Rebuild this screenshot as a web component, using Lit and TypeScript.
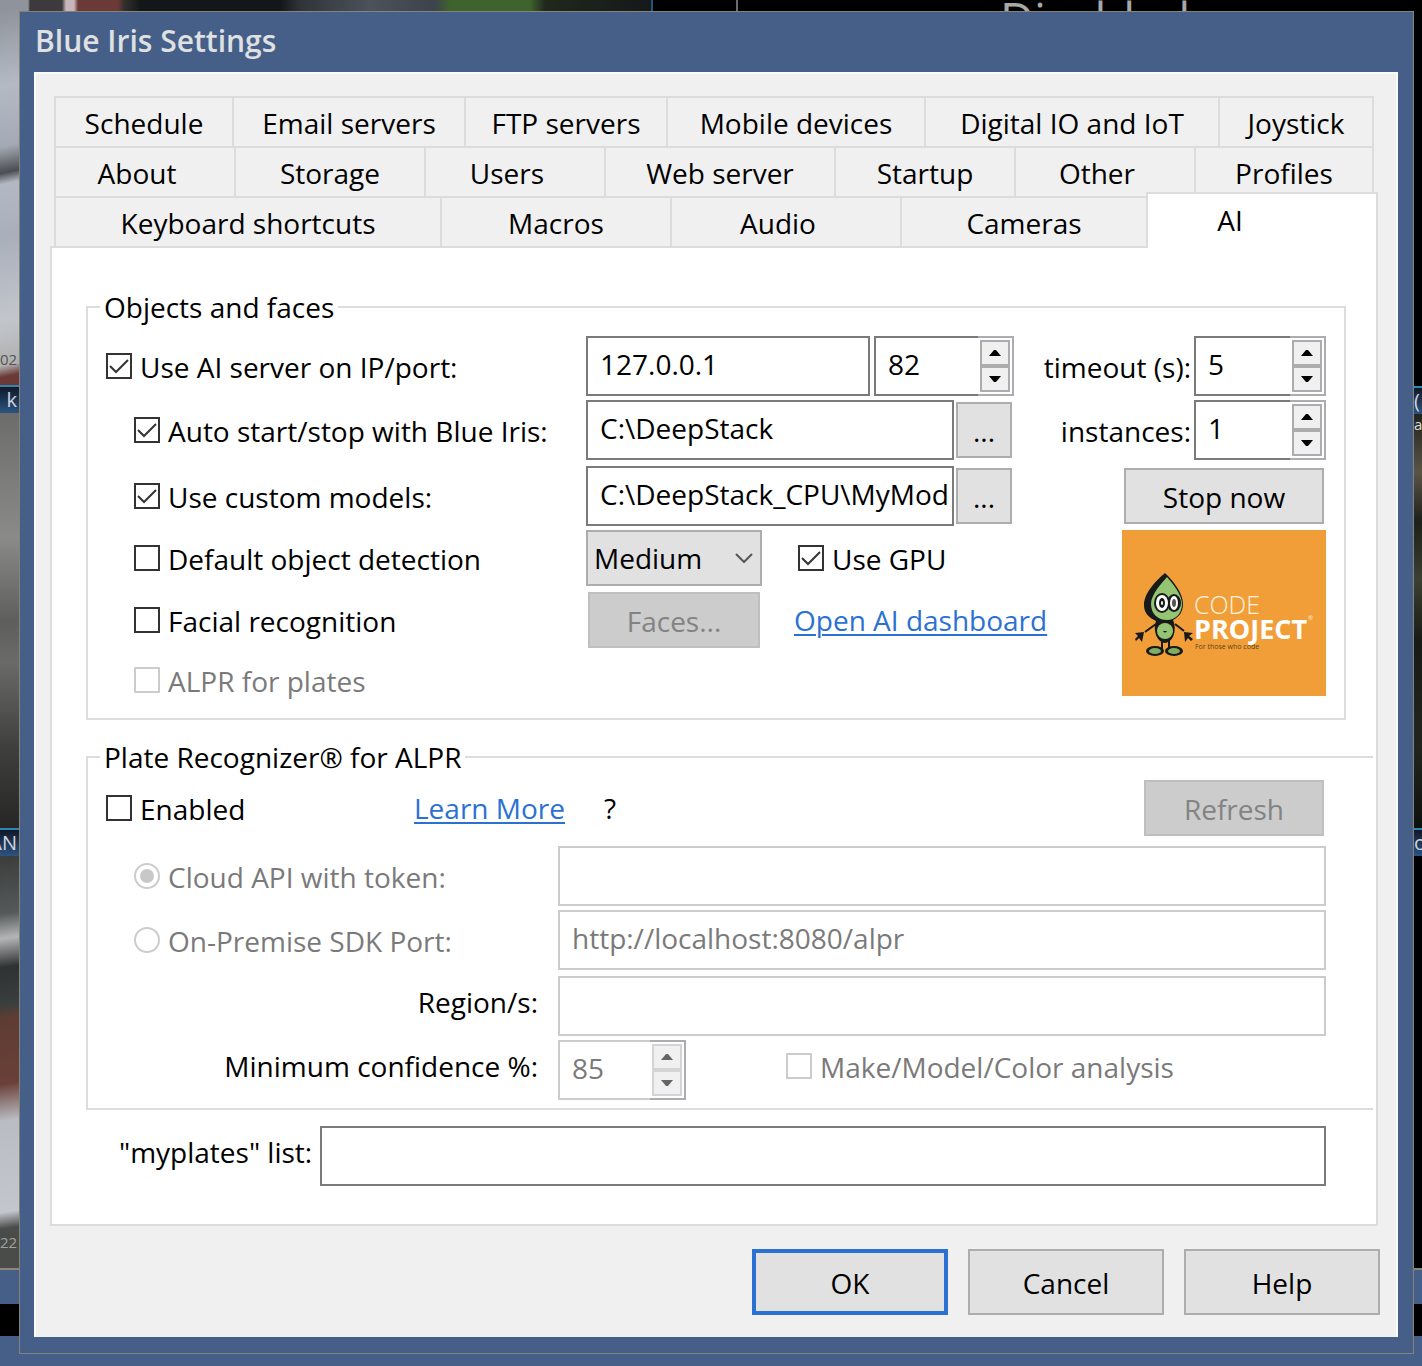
import { LitElement, html, css, svg, nothing } from "lit";
import { customElement, property } from "lit/decorators.js";
import { classMap } from "lit/directives/class-map.js";

interface Tab {
  label: string;
  trail?: boolean;
  active?: boolean;
}

const TAB_ROWS: { name: string; tabs: Tab[] }[] = [
  {
    name: "row-a",
    tabs: [
      { label: "Schedule" },
      { label: "Email servers" },
      { label: "FTP servers" },
      { label: "Mobile devices" },
      { label: "Digital IO and IoT" },
      { label: "Joystick" },
    ],
  },
  {
    name: "row-b",
    tabs: [
      { label: "About", trail: true },
      { label: "Storage" },
      { label: "Users", trail: true },
      { label: "Web server" },
      { label: "Startup" },
      { label: "Other", trail: true },
      { label: "Profiles" },
    ],
  },
  {
    name: "row-c",
    tabs: [
      { label: "Keyboard shortcuts" },
      { label: "Macros" },
      { label: "Audio", trail: true },
      { label: "Cameras" },
      { label: "AI", active: true },
    ],
  },
];

const controlText = css`
  * {
    box-sizing: border-box;
  }
  input,
  button,
  select {
    font: inherit;
    color: inherit;
    margin: 0;
    border-radius: 0;
  }
`;

@customElement("tick-option")
class TickOption extends LitElement {
  @property() label = "";
  @property() kind: "checkbox" | "radio" = "checkbox";
  @property({ type: Boolean }) checked = false;
  @property({ type: Boolean }) disabled = false;

  static styles = [
    controlText,
    css`
      :host {
        display: block;
      }
      .option {
        display: flex;
        align-items: center;
        gap: 8px;
        white-space: nowrap;
      }
      .box {
        display: grid;
        flex: none;
        width: 26px;
        height: 26px;
      }
      .box input,
      .box svg {
        grid-area: 1 / 1;
        width: 26px;
        height: 26px;
      }
      .box input {
        appearance: none;
        background: #fff;
        border: 2px solid #333;
      }
      .box.radio input {
        border-radius: 50%;
      }
      .box svg {
        pointer-events: none;
      }
      .text {
        padding-top: 2px;
      }
      .disabled {
        color: #7a7a7a;
      }
      .disabled .box input {
        border-color: #ccc;
      }
    `,
  ];

  render() {
    const mark =
      this.kind === "radio"
        ? svg`<circle cx="13" cy="13" r="7" fill="#c8c8c8" />`
        : svg`<path d="M4 13l6 6L22 7" fill="none" stroke="#333" stroke-width="2" />`;
    return html`<label class=${classMap({ option: true, disabled: this.disabled })}>
      <span class=${classMap({ box: true, radio: this.kind === "radio" })}>
        <input
          type=${this.kind}
          .checked=${this.checked}
          ?disabled=${this.disabled}
        />
        ${this.checked
          ? html`<svg viewBox="0 0 26 26" aria-hidden="true">${mark}</svg>`
          : nothing}
      </span>
      <span class="text">${this.label}</span>
    </label>`;
  }
}

@customElement("number-spinner")
class NumberSpinner extends LitElement {
  @property() value = "";
  @property() label = "";
  @property({ type: Boolean }) disabled = false;

  static styles = [
    controlText,
    css`
      :host {
        display: flex;
        min-width: 0;
        height: 60px;
      }
      .value {
        flex: 1 1 0;
        width: 0;
        min-width: 0;
        border: 2px solid #7a7a7a;
        border-right: 0;
        background: #fff;
        padding: 0 0 4px 12px;
      }
      .steps {
        display: grid;
        flex: none;
        grid-template-rows: 1fr 1fr;
        width: 36px;
        padding: 2px;
        border: 2px solid #abadb3;
        border-left: 0;
        background: #fff;
      }
      .step {
        display: grid;
        place-items: center;
        padding: 0;
        border: 2px solid #acacac;
        background: #f0f0f0;
      }
      .step svg {
        width: 12px;
        height: 6px;
        fill: #000;
      }
      .disabled {
        color: #7a7a7a;
        border-color: #ccc;
      }
      .steps.disabled {
        border-color: #abadb3;
      }
      .disabled .step {
        border-color: #d4d4d4;
      }
      .disabled .step svg {
        fill: #666;
      }
    `,
  ];

  render() {
    const off = this.disabled;
    return html`<input
        class=${classMap({ value: true, disabled: off })}
        type="text"
        aria-label=${this.label}
        .value=${this.value}
        ?disabled=${off}
      />
      <div class=${classMap({ steps: true, disabled: off })}>
        <button class="step" aria-label="Increase" ?disabled=${off}>
          <svg viewBox="0 0 12 6"><path d="M5 0h2l5 6H0z" /></svg>
        </button>
        <button class="step" aria-label="Decrease" ?disabled=${off}>
          <svg viewBox="0 0 12 6"><path d="M0 0h12L7 6H5z" /></svg>
        </button>
      </div>`;
  }
}

@customElement("code-project-logo")
class CodeProjectLogo extends LitElement {
  static styles = css`
    :host {
      display: block;
    }
    .logo {
      display: block;
      width: 204px;
      height: 166px;
      background: #f19e38;
    }
    .light {
      font: 300 25px "Open Sans", "Noto Sans", sans-serif;
      fill: #fff3df;
    }
    .heavy {
      font: 700 27px "Open Sans", "Noto Sans", sans-serif;
      fill: #fff;
    }
    .tiny {
      font: 7px "Open Sans", "Noto Sans", sans-serif;
      fill: #5c421c;
    }
    .mark {
      font: 6px "Open Sans", "Noto Sans", sans-serif;
      fill: #fff3df;
    }
  `;

  render() {
    return html`<svg class="logo" viewBox="0 0 204 166" role="img" aria-label="CodeProject">
      <g stroke="#17191a" fill="none" stroke-width="2">
        <path d="M34 94L23 102M53 94L62 101M40 110V119M47 110V119" />
      </g>
      <path
        d="M43 43C36 49 22 62 22 75C22 84 28 88 34 91C31 99 34 112 43 113C52 112 55 99 51 90C57 87 61 82 61 74C61 62 50 50 43 43Z"
        fill="#17191a"
      />
      <path
        d="M45 47C40 53 29 64 29 74C29 84 36 90 45 90C54 90 60 83 60 74C60 64 50 53 45 47Z"
        fill="#93c572"
      />
      <circle cx="43" cy="101" r="8" fill="#93c572" />
      <ellipse cx="40" cy="73" rx="8" ry="10" fill="#17191a" />
      <ellipse cx="52" cy="73" rx="7" ry="9" fill="#17191a" />
      <ellipse cx="40" cy="73" rx="6" ry="8" fill="#fff" />
      <ellipse cx="52" cy="73" rx="4" ry="7" fill="#fff" />
      <ellipse cx="40" cy="73" rx="3" ry="5" fill="#17191a" />
      <ellipse cx="52" cy="73" rx="2" ry="4" fill="#555" />
      <ellipse cx="40" cy="73" rx="1" ry="2" fill="#fff" />
      <path d="M41 101q2 3 4 0z" fill="#17191a" />
      <path
        d="M13 103L22 102L20 112L17 108L14 111L13 109L16 106ZM71 103L62 102L63 112L66 108L69 111L71 109L67 106Z"
        fill="#17191a"
      />
      <ellipse cx="33" cy="121" rx="9" ry="5" fill="#17191a" />
      <ellipse cx="52" cy="121" rx="9" ry="5" fill="#17191a" />
      <ellipse cx="33" cy="121" rx="6" ry="3" fill="#7fae62" />
      <ellipse cx="52" cy="121" rx="6" ry="3" fill="#7fae62" />
      <text class="light" x="72" y="84">CODE</text>
      <text class="heavy" x="72" y="109">PROJECT</text>
      <text class="mark" x="186" y="90">®</text>
      <text class="tiny" x="73" y="119">For those who code</text>
    </svg>`;
  }
}

@customElement("app-root")
class AppRoot extends LitElement {
  static styles = [
    controlText,
    css`
      :host {
        display: block;
        font: 28px / 40px "Open Sans", "Noto Sans", sans-serif;
        color: #000;
      }

      /* Camera wall behind the dialog */
      .desktop {
        display: grid;
        grid-template-columns: 19px minmax(0, 1fr) 8px;
        grid-template-rows: 11px auto 12px;
        min-height: 100vh;
        background: #465f88;
      }
      .strip {
        grid-column: 1 / -1;
        display: grid;
        grid-template-columns: minmax(0, 651fr) minmax(0, 85fr) minmax(0, 686fr);
        overflow: hidden;
      }
      .yard {
        background: linear-gradient(
          90deg,
          #8f949c 0 28px,
          #3c3a3c 30px 62px,
          #c9b4ba 66px 74px,
          #6b3a36 78px 118px,
          #33302c 124px,
          #141719 140px 280px,
          #2f3439 300px,
          #4c525b 370px,
          #3d434b 435px,
          #3f632d 450px 530px,
          #20281c 545px,
          #15191a 100%
        );
      }
      .gap {
        background: #000;
        border-left: 2px solid #1c5878;
      }
      .off {
        padding-left: 262px;
        background: #000;
        border-left: 2px solid #6c6c6c;
        color: #a8a8a8;
        font-size: 47px;
        line-height: 38px;
      }
      .edge {
        display: flex;
        flex-direction: column;
        overflow: hidden;
        white-space: nowrap;
      }
      .bar {
        display: flex;
        flex: none;
        height: 28px;
        border-top: 2px solid #2f86b0;
        background: linear-gradient(#10182a, #2c5482);
        color: #d0d4dc;
        font-size: 20px;
        line-height: 26px;
      }
      .tile {
        display: flex;
        flex-direction: column;
        justify-content: flex-end;
        flex: none;
        font-size: 15px;
        line-height: 20px;
      }
      .left .bar {
        justify-content: flex-end;
        padding-right: 2px;
      }
      .left .stamp {
        padding-bottom: 16px;
      }
      .pale {
        height: 374px;
        color: #555;
        background: linear-gradient(168deg, #8f949c, #b4bac4 20%, #a4aab5 36%, #4a4e52 43%, #b3b9c4 46%, #a9afba 60%, #c2c6cc 82%, #b0b0b0 94%, #6b3a36 97%);
      }
      .fog {
        height: 415px;
        background: linear-gradient(#6c6c6a, #8a8a88 30%, #5e5e5c 50%, #6a6a68 60%, #40403e 80%, #262624);
      }
      .porch {
        height: 412px;
        color: #a0a0a0;
        background: linear-gradient(
          172deg,
          #3b3d3c,
          #55595a 14%,
          #b4b6b6 20%,
          #2e3232 27%,
          #3a3f3e 36%,
          #5d3c34 39%,
          #6a4038 55%,
          #b9bcc2 64%,
          #c3c6cc 86%,
          #4a4c4a 90%
        );
      }
      .blue {
        flex: none;
        height: 36px;
        border-top: 2px solid #8a8678;
        background: #465f88;
      }
      .black {
        flex: none;
        height: 32px;
        background: #000;
      }
      .night {
        height: 375px;
        background: #000;
      }
      .garden {
        height: 414px;
        color: #ddd;
        justify-content: flex-start;
        background: linear-gradient(#20241e, #5a5448 14%, #1c211b 26%, #3a4032 40%, #171b17 55%, #20261f 80%, #0d110e);
      }
      .dark {
        height: 412px;
        background: #000;
      }

      /* Dialog frame */
      .dialog {
        border: 1px solid #85837a;
        background: #465f88;
        padding: 0 15px 15px 14px;
      }
      .title {
        margin: 0;
        height: 60px;
        padding-left: 1px;
        font-size: 30px;
        font-weight: 600;
        line-height: 58px;
        color: #dfe0e2;
      }
      .client {
        border: 2px solid #fbfbfb;
        border-bottom: 0;
        background: #f0f0f0;
        padding: 22px 18px 22px 14px;
      }

      /* Tabs */
      .tabs {
        padding: 0 4px;
      }
      .tab-row {
        display: grid;
      }
      .row-a {
        grid-template-columns: 178fr 232fr 202fr 258fr 294fr 156fr;
      }
      .row-b {
        grid-template-columns: 180fr 190fr 180fr 230fr 180fr 180fr 180fr;
      }
      .row-c {
        grid-template-columns: 386fr 230fr 230fr 246fr 228fr;
      }
      .tab {
        height: 50px;
        padding: 2px 0 0;
        border: 0 solid #dcdcdc;
        border-width: 2px 0 0 2px;
        background: #f0f0f0;
        white-space: nowrap;
      }
      .tab:last-child {
        border-right-width: 2px;
      }
      .tab.trail {
        padding-right: 16px;
      }
      .tab.active {
        position: relative;
        z-index: 1;
        height: 56px;
        margin: -4px -4px -2px 0;
        padding: 0 64px 2px 0;
        background: #fff;
      }
      .panel {
        border: 2px solid #dcdcdc;
        background: #fff;
        padding: 39px 0 38px 34px;
      }

      /* Groups */
      .group {
        min-width: 0;
        margin: 0;
        border: 2px solid #dcdcdc;
      }
      .group legend {
        height: 40px;
        margin-left: -6px;
        padding: 0 4px;
      }
      .objects {
        margin-right: 30px;
        padding: 9px 18px 6px;
      }
      .plates {
        margin: 17px 3px 0 0;
        border-right: 0;
        padding: 1px 47px 8px 18px;
      }
      .grid {
        display: grid;
        align-items: start;
      }
      .objects .grid {
        grid-template-columns: minmax(0, 480fr) minmax(0, 428fr) minmax(0, 312fr);
        grid-template-rows: 64px 66px 64px 62px 60px 60px;
      }
      .plates .grid {
        grid-template-columns: minmax(0, 452fr) minmax(0, 768fr);
        grid-template-rows: 68px 64px 66px 64px 60px;
      }
      .cell {
        display: flex;
        align-items: center;
        height: 60px;
        min-width: 0;
      }
      .short {
        height: 56px;
      }
      .indent {
        padding-left: 28px;
      }
      .end {
        justify-content: flex-end;
      }
      .field {
        width: 100%;
        min-width: 0;
        height: 60px;
        border: 2px solid #7a7a7a;
        background: #fff;
        padding: 0 4px 4px 12px;
      }
      .field:disabled {
        border-color: #ccc;
        color: #7a7a7a;
      }
      .field.soft {
        border-color: #ccc;
      }
      .address {
        gap: 4px;
      }
      .address .field {
        flex: 1;
      }
      .port {
        flex: 0 0 140px;
      }
      .path {
        gap: 2px;
        padding-right: 2px;
      }
      .small {
        flex: 0 0 132px;
      }
      .spin-label {
        padding: 2px 3px 0 0;
        white-space: nowrap;
      }
      .button {
        flex: none;
        height: 56px;
        padding: 2px 0 0;
        border: 2px solid #adadad;
        background: #e1e1e1;
      }
      .button:disabled {
        border-color: #bfbfbf;
        background: #ccc;
        color: #838383;
      }
      .browse {
        width: 56px;
      }
      .stop {
        width: 200px;
        margin-right: 2px;
      }
      .faces {
        width: 172px;
        margin: 0 34px 0 2px;
      }
      .refresh {
        width: 180px;
        margin: 0 2px 0 auto;
      }
      .combo {
        display: grid;
        align-items: center;
        width: 176px;
        margin-right: 36px;
      }
      .combo select,
      .combo svg {
        grid-area: 1 / 1;
      }
      .combo select {
        appearance: none;
        height: 56px;
        border: 2px solid #adadad;
        background: #e1e1e1;
        padding: 0 0 0 6px;
      }
      .combo svg {
        justify-self: end;
        width: 18px;
        height: 10px;
        margin-right: 9px;
        fill: none;
        stroke: #555;
        stroke-width: 2;
        pointer-events: none;
      }
      .link {
        color: #2b71d4;
        text-decoration-thickness: 2px;
        text-underline-offset: 3px;
        white-space: nowrap;
      }
      .brand {
        grid-column: 3;
        grid-row: 4 / 7;
        justify-self: end;
      }
      .wide {
        grid-column: 1 / -1;
        display: grid;
        grid-template-columns: minmax(0, 308fr) minmax(0, 190fr) minmax(0, 722fr);
        align-items: center;
        height: 60px;
      }
      .right-label {
        justify-content: flex-end;
        padding: 0 20px 8px 0;
      }
      .confidence {
        gap: 100px;
      }
      .confidence tick-option {
        padding-bottom: 8px;
      }
      .degree {
        flex: 0 0 128px;
      }
      .plate-list {
        display: flex;
        align-items: center;
        gap: 8px;
        margin-top: 16px;
        padding: 0 50px 0 33px;
      }
      .plate-list label {
        flex: none;
        padding-bottom: 8px;
      }

      .footer {
        display: flex;
        justify-content: flex-end;
        gap: 20px;
        margin: 23px -2px 0 0;
      }
      .footer .button {
        width: 196px;
        height: 66px;
      }
      .footer .primary {
        border: 4px solid #2b71d4;
      }
    `,
  ];

  private renderTab(tab: Tab) {
    return html`<button
      class=${classMap({ tab: true, trail: !!tab.trail, active: !!tab.active })}
      role="tab"
      aria-selected=${tab.active ? "true" : "false"}
    >
      ${tab.label}
    </button>`;
  }

  private renderObjects() {
    return html`<fieldset class="group objects">
      <legend>Objects and faces</legend>
      <div class="grid">
        <div class="cell">
          <tick-option checked label="Use AI server on IP/port:"></tick-option>
        </div>
        <div class="cell address">
          <input class="field" type="text" aria-label="Server IP" value="127.0.0.1" />
          <number-spinner class="port" label="Port" value="82"></number-spinner>
        </div>
        <div class="cell end">
          <span class="spin-label">timeout (s):</span>
          <number-spinner class="small" label="timeout (s)" value="5"></number-spinner>
        </div>

        <div class="cell indent">
          <tick-option checked label="Auto start/stop with Blue Iris:"></tick-option>
        </div>
        <div class="cell path">
          <input class="field" type="text" aria-label="Server folder" value="C:\\DeepStack" />
          <button class="button browse" aria-label="Browse server folder">...</button>
        </div>
        <div class="cell end">
          <span class="spin-label">instances:</span>
          <number-spinner class="small" label="instances" value="1"></number-spinner>
        </div>

        <div class="cell indent">
          <tick-option checked label="Use custom models:"></tick-option>
        </div>
        <div class="cell path">
          <input
            class="field"
            type="text"
            aria-label="Custom model folder"
            value="C:\\DeepStack_CPU\\MyModels"
          />
          <button class="button browse" aria-label="Browse custom model folder">...</button>
        </div>
        <div class="cell end">
          <button class="button stop">Stop now</button>
        </div>

        <div class="cell short indent">
          <tick-option label="Default object detection"></tick-option>
        </div>
        <div class="cell short">
          <div class="combo">
            <select aria-label="Detection size">
              <option>Medium</option>
            </select>
            <svg viewBox="0 0 18 10" aria-hidden="true"><path d="M1 1l8 8 8-8" /></svg>
          </div>
          <tick-option checked label="Use GPU"></tick-option>
        </div>
        <code-project-logo class="brand"></code-project-logo>

        <div class="cell short indent">
          <tick-option label="Facial recognition"></tick-option>
        </div>
        <div class="cell short">
          <button class="button faces" disabled>Faces...</button>
          <a class="link" href="#dashboard">Open AI dashboard</a>
        </div>

        <div class="cell short indent">
          <tick-option disabled label="ALPR for plates"></tick-option>
        </div>
      </div>
    </fieldset>`;
  }

  private renderPlates() {
    return html`<fieldset class="group plates">
      <legend>Plate Recognizer® for ALPR</legend>
      <div class="grid">
        <div class="wide">
          <tick-option label="Enabled"></tick-option>
          <div><a class="link" href="#learn">Learn More</a></div>
          <div class="cell">
            <span>?</span>
            <button class="button refresh" disabled>Refresh</button>
          </div>
        </div>

        <div class="cell indent">
          <tick-option kind="radio" checked disabled label="Cloud API with token:"></tick-option>
        </div>
        <input class="field" type="text" aria-label="API token" disabled />

        <div class="cell indent">
          <tick-option kind="radio" disabled label="On-Premise SDK Port:"></tick-option>
        </div>
        <input
          class="field"
          type="text"
          aria-label="SDK address"
          value="http://localhost:8080/alpr"
          disabled
        />

        <label class="cell right-label" for="region">Region/s:</label>
        <input class="field soft" id="region" type="text" />

        <span class="cell right-label">Minimum confidence %:</span>
        <div class="cell confidence">
          <number-spinner
            class="degree"
            label="Minimum confidence %"
            value="85"
            disabled
          ></number-spinner>
          <tick-option disabled label="Make/Model/Color analysis"></tick-option>
        </div>
      </div>
    </fieldset>`;
  }

  render() {
    return html`<div class="desktop">
      <div class="strip">
        <div class="yard"></div>
        <div class="gap"></div>
        <div class="off">Disabled</div>
      </div>

      <div class="edge left">
        <div class="tile stamp pale">02</div>
        <div class="bar">k</div>
        <div class="tile fog"></div>
        <div class="bar">AN</div>
        <div class="tile stamp porch">22</div>
        <div class="blue"></div>
        <div class="black"></div>
      </div>

      <main class="dialog" role="dialog" aria-labelledby="title">
        <h1 class="title" id="title">Blue Iris Settings</h1>
        <div class="client">
          <div class="tabs" role="tablist">
            ${TAB_ROWS.map(
              (row) => html`<div class="tab-row ${row.name}">
                ${row.tabs.map((tab) => this.renderTab(tab))}
              </div>`
            )}
          </div>
          <div class="panel" role="tabpanel">
            ${this.renderObjects()} ${this.renderPlates()}
            <div class="plate-list">
              <label for="myplates">"myplates" list:</label>
              <input class="field" id="myplates" type="text" />
            </div>
          </div>
          <div class="footer">
            <button class="button primary">OK</button>
            <button class="button">Cancel</button>
            <button class="button">Help</button>
          </div>
        </div>
      </main>

      <div class="edge">
        <div class="tile night"></div>
        <div class="bar">(</div>
        <div class="tile garden">a</div>
        <div class="bar">o</div>
        <div class="tile dark"></div>
        <div class="blue"></div>
        <div class="black"></div>
      </div>
    </div>`;
  }
}
